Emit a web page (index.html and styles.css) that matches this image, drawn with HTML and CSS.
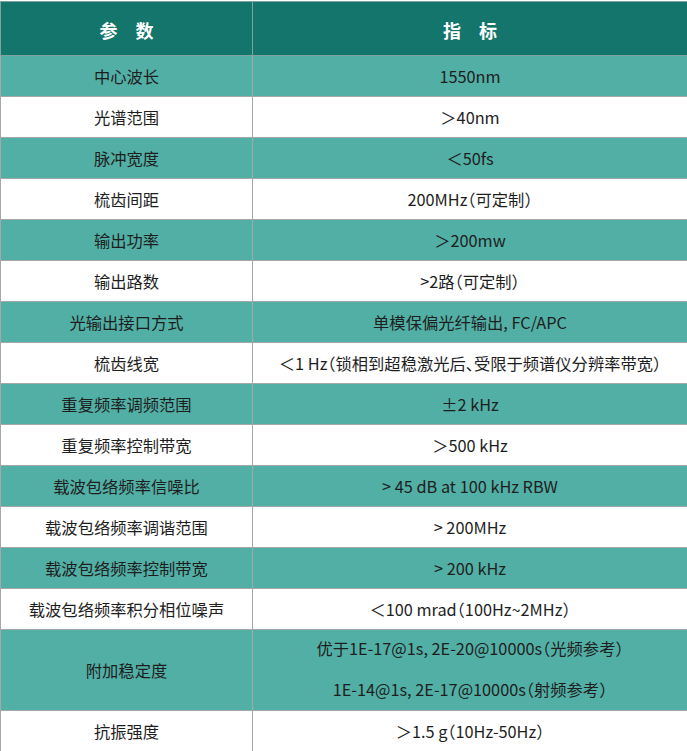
FILE: index.html
```html
<!DOCTYPE html>
<html lang="zh-CN">
<head>
<meta charset="utf-8">
<title>参数</title>
<link rel="stylesheet" href="styles.css">
</head>
<body>
<table class="spec">
  <colgroup><col class="c1"><col class="c2"></colgroup>
  <thead>
    <tr><th>参　数</th><th>指　标</th></tr>
  </thead>
  <tbody>
    <tr class="tl"><td>中心波长</td><td>1550nm</td></tr>
    <tr><td>光谱范围</td><td>＞40nm</td></tr>
    <tr class="tl"><td>脉冲宽度</td><td>＜50fs</td></tr>
    <tr><td>梳齿间距</td><td>200MHz<span class="p">（</span>可定制<span class="p">）</span></td></tr>
    <tr class="tl"><td>输出功率</td><td>＞200mw</td></tr>
    <tr><td>输出路数</td><td>&gt;2路<span class="p">（</span>可定制<span class="p">）</span></td></tr>
    <tr class="tl"><td>光输出接口方式</td><td>单模保偏光纤输出, FC/APC</td></tr>
    <tr><td>梳齿线宽</td><td>＜1 Hz<span class="p">（</span>锁相到超稳激光后<span class="p">、</span>受限于频谱仪分辨率带宽<span class="p">）</span></td></tr>
    <tr class="tl"><td>重复频率调频范围</td><td>±2 kHz</td></tr>
    <tr><td>重复频率控制带宽</td><td>＞500 kHz</td></tr>
    <tr class="tl"><td>载波包络频率信噪比</td><td>&gt; 45 dB at 100 kHz RBW</td></tr>
    <tr><td>载波包络频率调谐范围</td><td>&gt; 200MHz</td></tr>
    <tr class="tl"><td>载波包络频率控制带宽</td><td>&gt; 200 kHz</td></tr>
    <tr><td>载波包络频率积分相位噪声</td><td>＜100 mrad<span class="p">（</span>100Hz~2MHz<span class="p">）</span></td></tr>
    <tr class="tl"><td>附加稳定度</td><td><div class="ln">优于1E-17@1s, 2E-20@10000s<span class="p">（</span>光频参考<span class="p">）</span></div><div class="ln">1E-14@1s, 2E-17@10000s<span class="p">（</span>射频参考<span class="p">）</span></div></td></tr>
    <tr><td>抗振强度</td><td>＞1.5 g<span class="p">（</span>10Hz-50Hz<span class="p">）</span></td></tr>
  </tbody>
</table>
</body>
</html>
```
FILE: styles.css
```css
html, body {
  margin: 0;
  padding: 0;
  background: #ffffff;
}
body {
  font-family: "Noto Sans CJK SC", "Noto Sans", sans-serif;
  color: #1e1e1e;
}
.spec {
  border-collapse: collapse;
  width: 687px;
  margin-top: 1px;
  table-layout: fixed;
}
.c1 { width: 252px; }
.c2 { width: 435px; }
.spec th {
  background: #13756b;
  color: #ffffff;
  font-size: 18px;
  font-weight: 700;
  height: 51px;
  padding: 2px 0 0;
  border: 1px solid #7fa39f;
  text-align: center;
  vertical-align: middle;
}
.spec td {
  height: 40px;
  padding: 0;
  font-size: 16.3px;
  line-height: 20px;
  text-align: center;
  vertical-align: middle;
  border: 1px solid #a3a9a8;
  background: #ffffff;
}
.spec tr.tl td {
  background: #52afa5;
}
.p {
  font-feature-settings: "halt";
}
.ln {
  height: 41px;
  line-height: 41px;
}
.ln:first-child {
  margin-top: -2px;
}
```
